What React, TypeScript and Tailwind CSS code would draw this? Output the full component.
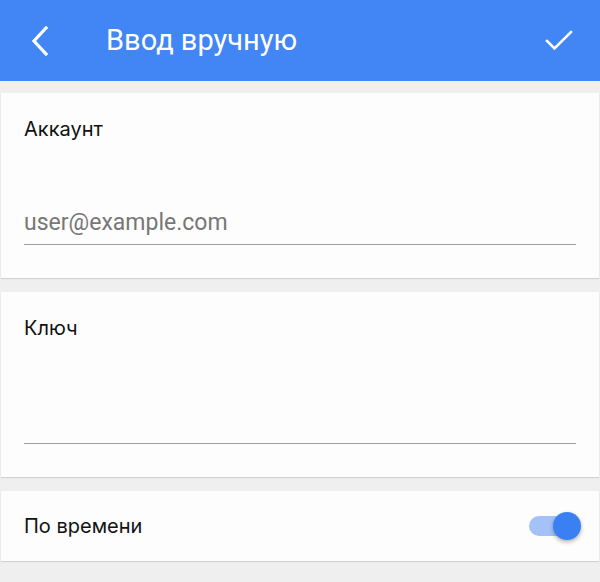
import { useState } from 'react';

function BackIcon() {
  return (
    <svg width="20" height="30" viewBox="0 0 20 30" fill="none">
      <path d="M16 2 L4 15 L16 28" stroke="white" strokeWidth="3.2" strokeLinecap="square" />
    </svg>
  );
}

function CheckIcon() {
  return (
    <svg width="28" height="22" viewBox="0 0 28 22" fill="none">
      <path d="M2 11 L9.5 18.5 L26 2" stroke="white" strokeWidth="2.6" strokeLinecap="square" />
    </svg>
  );
}

function Card({ children, className }: { children: React.ReactNode; className?: string }) {
  return (
    <div className={`mx-px bg-[#fdfdfd] shadow-[0_1px_1px_rgba(0,0,0,0.12)] ${className ?? ''}`}>
      {children}
    </div>
  );
}

export default function App() {
  const [timeBased, setTimeBased] = useState(true);

  return (
    <div className="h-[582px] w-[600px] overflow-hidden bg-[#efefef] font-['Inter',sans-serif]">
      <header className="flex h-[81px] items-center bg-[#4285f4] px-[30px]">
        <button className="flex w-[76px] items-center">
          <BackIcon />
        </button>
        <h1 className="flex-1 font-['Roboto',sans-serif] text-[29px] text-white">Ввод вручную</h1>
        <button className="mr-[-3px]">
          <CheckIcon />
        </button>
      </header>

      <div className="flex flex-col gap-[14px] pt-[12px]">
        <Card className="h-[185px] px-[23px] pt-[24px]">
          <div className="text-[20px] leading-[24px] text-[#111]">Аккаунт</div>
          <div className="mt-[67px] border-b-[1.5px] border-[#9e9e9e] pb-[6px] font-['Roboto',sans-serif] text-[23px] leading-[30px] text-[#777]">
            user@example.com
          </div>
        </Card>

        <Card className="h-[185px] px-[23px] pt-[24px]">
          <div className="text-[20px] leading-[24px] text-[#111]">Ключ</div>
          <div className="mt-[67px] h-[37px] border-b-[1.5px] border-[#9e9e9e]" />
        </Card>

        <Card className="flex h-[70px] items-center justify-between px-[23px]">
          <div className="text-[20px] text-[#111]">По времени</div>
          <button
            onClick={() => setTimeBased(!timeBased)}
            className="relative mr-[1px] h-[20px] w-[46px] rounded-full bg-[#a4c2f8]"
          >
            <span className="absolute right-[-6px] top-[-4px] h-[28px] w-[28px] rounded-full bg-[#3b80f2] shadow-[0_2px_4px_rgba(0,0,0,0.3)]" />
          </button>
        </Card>
      </div>
    </div>
  );
}
